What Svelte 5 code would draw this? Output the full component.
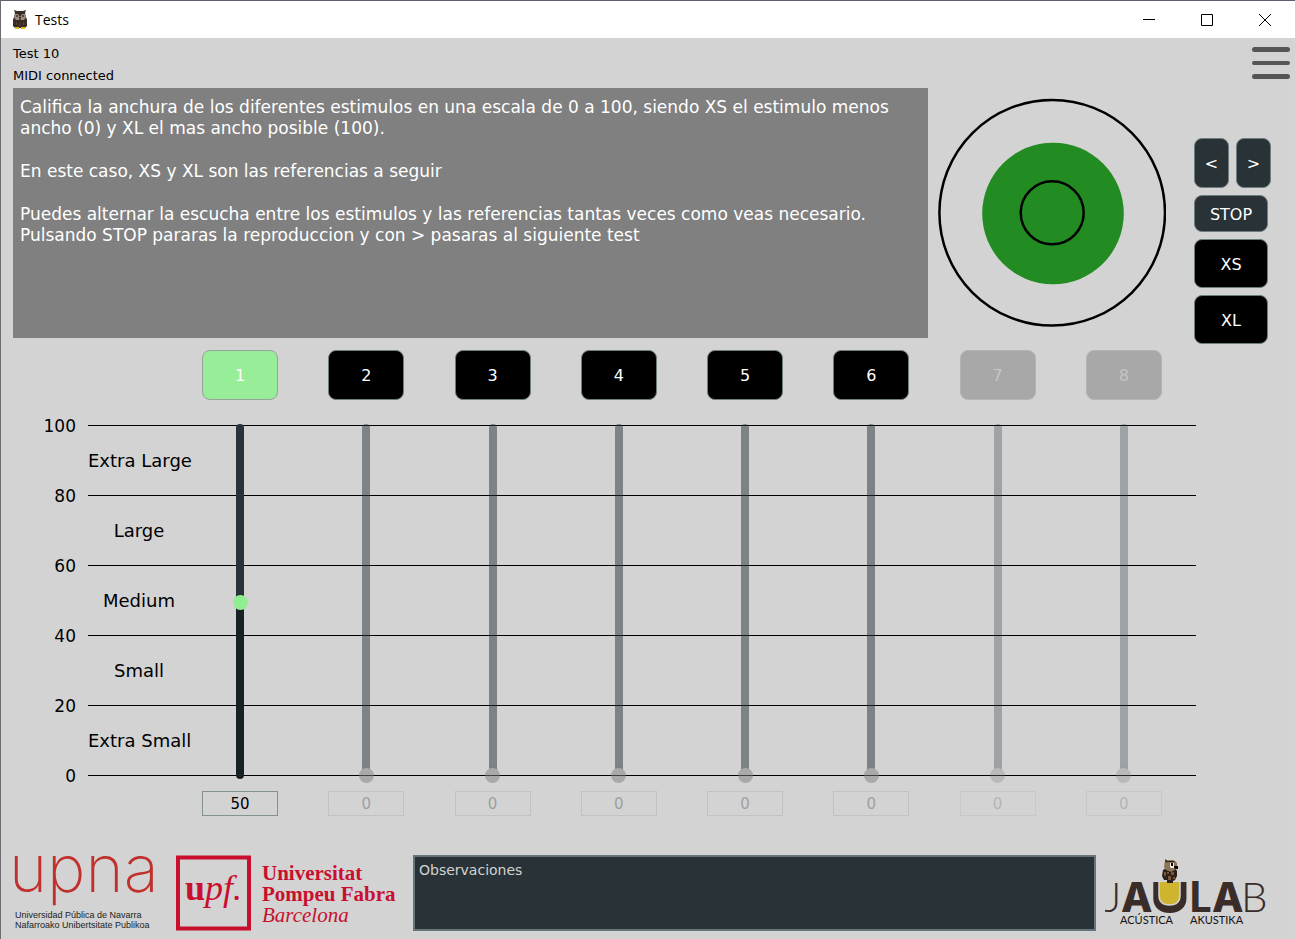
<script>
  let channels = $state([
    { id: 1, value: 50, state: 'active' },
    { id: 2, value: 0, state: 'idle' },
    { id: 3, value: 0, state: 'idle' },
    { id: 4, value: 0, state: 'idle' },
    { id: 5, value: 0, state: 'idle' },
    { id: 6, value: 0, state: 'idle' },
    { id: 7, value: 0, state: 'off' },
    { id: 8, value: 0, state: 'off' }
  ]);
  const ticks = [100, 80, 60, 40, 20, 0];
  const bands = ['Extra Large', 'Large', 'Medium', 'Small', 'Extra Small'];
  let notes = $state('');

  function select(channel) {
    for (const c of channels) {
      if (c.state !== 'off') c.state = c.id === channel.id ? 'active' : 'idle';
    }
  }
</script>

<div class="window">
  <header class="titlebar">
    <svg class="app-icon" viewBox="0 0 16 20" aria-hidden="true">
      <path d="M2 0l3 1h6l3-1-1 3 1 4 1 3v6l-2 2H3l-2-2v-6l1-3 1-4z" fill="#3a2c25" />
      <path d="M3 4l3 0 2 3 2-3 3 0 1 3-2 3H9L8 9l-1 1H4L2 7z" fill="#9b8c7b" />
      <path d="M4 5h2v2H4zM10 5h2v2h-2z" fill="#54463b" />
      <path d="M7 7h2l-1 3z" fill="#1c1512" />
      <path d="M4 12h1v3H4zM7 13h1v3H7zM11 12h1v3h-1z" fill="#5b4433" />
      <path d="M3 17h4v2H3zM9 17h4v2H9z" fill="#e0bb20" />
    </svg>
    <h1>Tests</h1>
    <div class="window-buttons">
      <button aria-label="Minimize">
        <svg viewBox="0 0 12 12"><path d="M0 5.5h12" /></svg>
      </button>
      <button aria-label="Maximize">
        <svg viewBox="0 0 12 12"><path d="M.5.5h11v11H.5z" /></svg>
      </button>
      <button aria-label="Close">
        <svg viewBox="0 0 12 12"><path d="M0 0l12 12M12 0L0 12" /></svg>
      </button>
    </div>
  </header>

  <main>
    <div class="status">
      <div>
        <p>Test 10</p>
        <p>MIDI connected</p>
      </div>
      <button class="menu" aria-label="Menu">
        <svg viewBox="0 0 38 32">
          <rect width="38" height="5" rx="2.5" />
          <rect y="14" width="38" height="4" rx="2" />
          <rect y="27" width="38" height="5" rx="2.5" />
        </svg>
      </button>
    </div>

    <section class="top">
      <div class="instructions">
        <p>Califica la anchura de los diferentes estimulos en una escala de 0 a 100, siendo XS el estimulo menos ancho (0) y XL el mas ancho posible (100).</p>
        <p>En este caso, XS y XL son las referencias a seguir</p>
        <p>Puedes alternar la escucha entre los estimulos y las referencias tantas veces como veas necesario.<br />Pulsando STOP pararas la reproduccion y con &gt; pasaras al siguiente test</p>
      </div>
      <svg class="rings" viewBox="0 0 228 230" aria-hidden="true">
        <circle cx="115" cy="115.500" r="70.800" fill="#228b22" />
        <circle cx="114.200" cy="114.800" r="112.800" />
        <circle cx="114.200" cy="114.800" r="31.500" />
      </svg>
      <div class="controls">
        <div class="nav">
          <button class="btn dark">&lt;</button>
          <button class="btn dark">&gt;</button>
        </div>
        <button class="btn dark stop">STOP</button>
        <button class="btn wide">XS</button>
        <button class="btn wide">XL</button>
      </div>
    </section>

    <section class="chart">
      <div class="ticks">
        {#each ticks as tick}<span>{tick}</span>{/each}
      </div>
      <div class="bands">
        {#each bands as band}<div><span>{band}</span></div>{/each}
      </div>
      <div class="channels">
        {#each channels as channel (channel.id)}
          <div class="channel {channel.state}">
            <button class="btn pick" disabled={channel.state === 'off'} onclick={() => select(channel)}>{channel.id}</button>
            <div class="slider">
              <span
                class="rail"
                style="background: linear-gradient(to top, #182124 {channel.state === 'active' ? channel.value : 0}%, #283238 0)"
              ></span>
              <input
                type="range"
                min="0"
                max="100"
                aria-label="Estimulo {channel.id}"
                disabled={channel.state !== 'active'}
                bind:value={channel.value}
              />
            </div>
            <input class="value" type="text" aria-label="Valor {channel.id}" readonly value={channel.value} />
          </div>
        {/each}
      </div>
    </section>

    <footer>
      <svg class="upna" viewBox="0 0 148 80" role="img" aria-label="upna">
        <text class="upna-name" x="-4" y="39">upna</text>
        <text class="upna-sub" x="2" y="65">Universidad Pública de Navarra</text>
        <text class="upna-sub" x="2" y="75">Nafarroako Unibertsitate Publikoa</text>
      </svg>
      <svg class="upf" viewBox="0 0 224 76" role="img" aria-label="Universitat Pompeu Fabra Barcelona">
        <rect x="2" y="2.500" width="71" height="71" fill="none" stroke="#c8102e" stroke-width="4" />
        <text class="upf-mark" x="9" y="45"><tspan class="strong">u</tspan><tspan class="slant">pf.</tspan></text>
        <text class="upf-name strong" x="86" y="25">Universitat</text>
        <text class="upf-name strong" x="86" y="46">Pompeu Fabra</text>
        <text class="upf-name slant" x="86" y="67">Barcelona</text>
      </svg>
      <textarea aria-label="Observaciones" placeholder="Observaciones" bind:value={notes}></textarea>
      <svg class="jaulab" viewBox="0 0 164 72" role="img" aria-label="Jaulab acústica akustika">
        <clipPath id="cup-rim"><rect x="44" y="25" width="42" height="34" /></clipPath>
        <text class="thin" x="-1" y="55">J</text>
        <text class="heavy" x="16" y="55">A</text>
        <text class="heavy cup" x="65" y="55" clip-path="url(#cup-rim)">U</text>
        <text class="heavy narrow" x="84" y="55">L</text>
        <text class="heavy" x="107" y="55">A</text>
        <text class="thin" x="136" y="55">B</text>
        <path d="M54 25h21v13q0 10-10.500 10T54 38z" fill="#cfb52f" />
        <path d="M54 25v13q0 10 10.500 10T75 38V25" fill="none" stroke="#d3d3d3" stroke-width="1.500" />
        <path d="M58 13l3-2h9l2 3v5l-2 4-2 1v2h-6v-3h-3l-2-4z" fill="#2b211b" />
        <path d="M60 3l2 1 2-1h4l2 1 2 2v4l-2 3-4 2-5-2-2-3z" fill="#8c7458" />
        <path d="M60 2l3 2h6l1 1h-8l-1 1z" fill="#2b211b" />
        <path d="M65 6h4v5h-3l-1-1z" fill="#f2efe9" />
        <path d="M66 6h2v3h-2zM69 9h4v3h-2l-2-1z" fill="#0b0908" />
        <path d="M59 15h2v4h-2zM63 19h3v4h-3zM66 15h3v3h-3zM68 20h2v2h-2zM62 15h2v2h-2z" fill="#79553a" />
        <text class="tag" x="15" y="67">ACÚSTICA</text>
        <text class="tag" x="85" y="67">AKUSTIKA</text>
      </svg>
    </footer>
  </main>
</div>

<style>
  :global(body) {
    margin: 0;
    background: #d3d3d3;
  }
  .window {
    box-sizing: border-box;
    min-height: 100vh;
    border-top: 1px solid #5f5f6b;
    border-left: 1px solid #6b6b70;
    background: #d3d3d3;
    color: #000;
    font-family: Verdana, 'DejaVu Sans', sans-serif;
    font-size: 17px;
  }
  button,
  input,
  textarea {
    box-sizing: border-box;
    margin: 0;
    font-family: inherit;
  }
  p,
  h1 {
    margin: 0;
  }
  svg {
    display: block;
    flex: none;
  }
  .titlebar {
    display: flex;
    align-items: center;
    height: 37px;
    padding: 0 1px 0 11px;
    gap: 7px;
    background: #fff;
  }
  .app-icon {
    width: 16px;
    height: 20px;
  }
  h1 {
    flex: 1;
    font: 400 14px/20px 'Open Sans', 'Noto Sans', sans-serif;
  }
  .window-buttons {
    display: flex;
  }
  .window-buttons button {
    display: grid;
    place-items: center;
    width: 58px;
    height: 37px;
    padding: 0;
    border: 0;
    background: none;
  }
  .window-buttons svg {
    width: 12px;
    height: 12px;
    fill: none;
    stroke: #000;
    stroke-width: 1;
  }
  .status {
    display: flex;
    justify-content: space-between;
    align-items: flex-start;
    padding: 5px 5px 1px 12px;
    font-size: 13px;
    line-height: 22px;
  }
  .menu {
    margin-top: 4px;
    padding: 0;
    border: 0;
    background: none;
  }
  .menu svg {
    width: 38px;
    height: 32px;
    fill: #555;
  }
  .top {
    display: flex;
    align-items: flex-start;
    padding: 0 24px 0 12px;
  }
  .instructions {
    box-sizing: border-box;
    flex: 1;
    min-height: 250px;
    padding: 9px 7px;
    background: #808080;
    color: #fff;
    line-height: 21px;
  }
  .instructions p + p {
    margin-top: 22px;
  }
  .rings {
    width: 228px;
    height: 230px;
    margin: 10px 28px 0 10px;
    fill: none;
  }
  .rings circle + circle {
    stroke: #000;
    stroke-width: 2.500;
  }
  .controls {
    display: flex;
    flex-direction: column;
    gap: 7px;
    width: 77px;
    margin-top: 50px;
  }
  .nav {
    display: flex;
    gap: 7px;
  }
  .btn {
    height: 50px;
    padding: 1px 0 0;
    border: 1px solid #6f7c80;
    border-radius: 8px;
    background: #000;
    color: #fff;
    font-size: 16px;
  }
  .dark {
    background: #283237;
  }
  .nav .btn {
    flex: 1;
  }
  .controls .stop {
    width: 74px;
    height: 37px;
  }
  .controls .wide {
    width: 74px;
    height: 49px;
  }
  .chart {
    display: grid;
    grid-template-columns: 75px 1fr;
    column-gap: 12px;
    padding: 6px 99px 0 0;
  }
  .ticks,
  .bands,
  .channels {
    grid-row: 1;
  }
  .ticks {
    display: flex;
    flex-direction: column;
    padding-top: 41px;
    text-align: right;
    line-height: 70px;
  }
  .bands {
    grid-column: 2;
    padding-top: 75px;
    font-size: 18px;
    line-height: 69px;
  }
  .bands div {
    border-top: 1px solid #000;
  }
  .bands div:last-child {
    border-bottom: 1px solid #000;
  }
  .bands span {
    display: block;
    width: 102px;
    text-align: center;
    white-space: nowrap;
  }
  .channels {
    z-index: 1;
    grid-column: 2;
    display: grid;
    grid-template-columns: repeat(8, 1fr);
    padding: 0 9px 0 89px;
  }
  .channel {
    display: flex;
    flex-direction: column;
    align-items: center;
  }
  .pick {
    width: 76px;
    flex: none;
  }
  .active .pick {
    border-color: #96a39b;
    background: #98ee98;
  }
  .off .pick {
    border-color: #b3b5b5;
    background: #a8a8a8;
    color: #c4c4c4;
  }
  .slider {
    display: grid;
    justify-items: center;
    height: 362px;
    margin: 21px 0 8px;
  }
  .rail,
  .slider input {
    grid-area: 1 / 1;
  }
  .rail {
    width: 8px;
    margin: 3px 0 4px;
    border-radius: 4px;
  }
  .slider input {
    z-index: 1;
    width: 15px;
    height: 362px;
    appearance: none;
    background: none;
    writing-mode: vertical-lr;
    direction: rtl;
  }
  .slider input::-webkit-slider-thumb {
    appearance: none;
    width: 15px;
    height: 15px;
    border-radius: 50%;
    background: #808080;
  }
  .active .slider input::-webkit-slider-thumb {
    background: #90ee90;
  }
  .idle .slider {
    opacity: 0.5;
  }
  .off .slider {
    opacity: 0.3;
  }
  .value {
    width: 76px;
    height: 25px;
    padding: 0;
    border: 1px solid #83918f;
    background: none;
    color: #000;
    font-size: 15px;
    text-align: center;
  }
  .idle .value {
    border-color: #c0c3c3;
    color: #a0a0a0;
  }
  .off .value {
    border-color: #c7c9c9;
    color: #b5b5b5;
  }
  footer {
    display: flex;
    align-items: center;
    padding: 37px 26px 5px 12px;
  }
  .upna {
    width: 148px;
    height: 80px;
    overflow: visible;
  }
  .upna-name {
    fill: #c0302c;
    font: 200 65px Inter, sans-serif;
  }
  .upna-sub {
    fill: #222;
    font: 400 9px 'Liberation Sans', sans-serif;
  }
  .upf {
    width: 224px;
    height: 76px;
    margin: 0 13px 0 15px;
    fill: #c8102e;
    font-family: 'Liberation Serif', serif;
  }
  .strong {
    font-weight: 700;
  }
  .slant {
    font-style: italic;
  }
  .upf-mark {
    font-size: 36px;
  }
  .upf-name {
    font-size: 21px;
  }
  textarea {
    flex: 1;
    min-width: 0;
    height: 76px;
    padding: 4px;
    border: 2px solid #65757a;
    background: #283237;
    color: #d3d3d3;
    font-size: 14px;
    line-height: 18px;
    resize: none;
  }
  textarea::placeholder {
    color: #d3d3d3;
  }
  .jaulab {
    width: 164px;
    height: 72px;
    margin-left: 9px;
    fill: #3a2d29;
  }
  .thin {
    font: 300 42px Lato, sans-serif;
  }
  .heavy {
    font: 800 41px Inter, sans-serif;
  }
  .heavy.cup {
    font-size: 54px;
    text-anchor: middle;
  }
  .heavy.narrow {
    font: 900 42px Lato, sans-serif;
  }
  .tag {
    fill: #111;
    font: 400 11px Lato, sans-serif;
  }
</style>
